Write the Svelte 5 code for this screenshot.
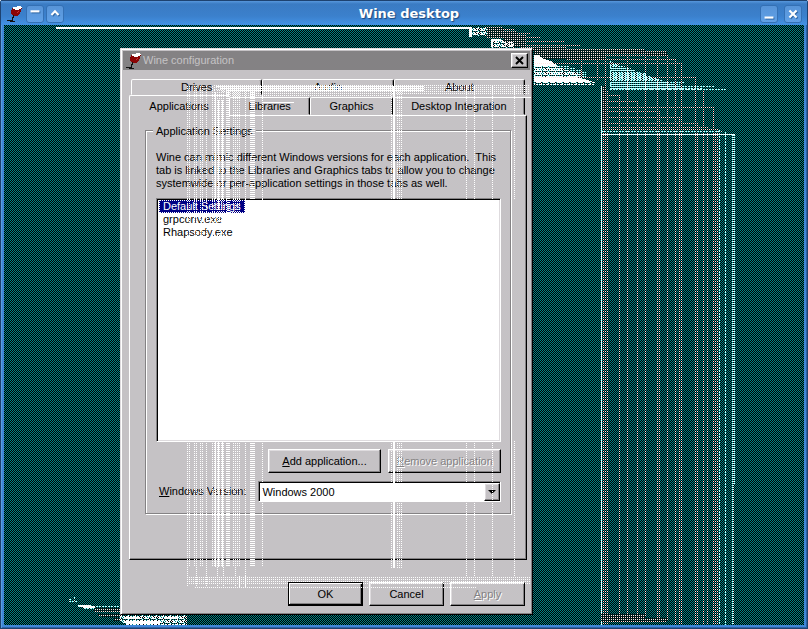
<script>
  const backTabs = ['Drives', 'Audio', 'About'];
  const frontTabs = [
    { name: 'Applications', grow: 100 },
    { name: 'Libraries', grow: 81 },
    { name: 'Graphics', grow: 82 },
    { name: 'Desktop Integration', grow: 133 }
  ];
  const apps = ['Default Settings', 'grpconv.exe', 'Rhapsody.exe'];
  const versions = ['Windows 2000', 'Windows XP', 'Windows 98'];
  let app = $state('Default Settings');
  let version = $state('Windows 2000');

  // Repaint trails sit on odd pixels, so that they share the phase of the weave
  const odd = (n) => n | 1;

  // Repaint trails, in desktop coordinates: [x, top, bottom]
  const columns = [
    [603, 88, 625], [605, 48, 625], [607, 90, 625], [619, 94, 616], [627, 50, 616],
    [637, 100, 616], [645, 50, 616], [657, 53, 618], [659, 110, 622], [667, 54, 620],
    [675, 58, 624], [679, 116, 625], [681, 62, 625], [695, 76, 625], [697, 122, 625],
    [703, 88, 625], [707, 126, 625], [713, 106, 625], [715, 128, 625], [717, 128, 625],
    [581, 49, 80], [597, 50, 80]
  ];
  // [y, left, right]
  const rows = [
    [94, 603, 619], [100, 603, 637], [106, 603, 713], [110, 603, 659], [116, 603, 679],
    [122, 603, 697], [126, 603, 707], [128, 603, 718], [50, 566, 645], [52, 566, 657], [54, 566, 667],
    [48, 566, 605], [58, 566, 675], [62, 534, 681], [76, 534, 695], [88, 645, 703],
    [28, 487, 514], [32, 487, 530], [36, 487, 540], [40, 505, 564], [44, 505, 581],
    [614, 601, 608], [616, 601, 645], [618, 601, 657], [620, 601, 667], [624, 601, 675]
  ];
  const cyanRows = [
    [65, 610, 618], [68, 610, 626], [70, 610, 634], [73, 610, 645], [75, 610, 645],
    [77, 610, 651], [79, 610, 659], [82, 610, 684], [84, 610, 680], [86, 610, 714],
    [88, 610, 702], [89, 610, 727], [606, 78, 120], [608, 84, 120]
  ];
  const dialogColumns = [
    187, 189, 194, 196, 200, 202, 206, 212, 214, 217, 219, 221, 223, 226, 233, 235, 237, 239, 245, 262
  ];
  const rightColumns = [391, 397, 399, 401];
  const longColumns = [466, 474, 492, 514];
</script>

<main class="frame">
  <header class="bar">
    <span class="side">
      {@render glass()}
      <button class="wm" aria-label="Shade"><svg viewBox="0 0 18 18"><path d="M4 6h10" /></svg></button>
      <button class="wm" aria-label="Roll up"><svg viewBox="0 0 18 18"><path d="M5 10l4-4 4 4" /></svg></button>
    </span>
    <h1>Wine desktop</h1>
    <span class="side end">
      <button class="wm" aria-label="Minimize"><svg viewBox="0 0 18 18"><path d="M4 13h10" /></svg></button>
      <button class="wm" aria-label="Close desktop"><svg viewBox="0 0 18 18"><path d="M5 5l8 8M13 5l-8 8" /></svg></button>
    </span>
  </header>

  <div class="desktop">
    <svg class="trails" viewBox="4 25 800 600" width="800" height="600" aria-hidden="true">
      <defs>
        <pattern id="pink" x="1" y="1" width="2" height="2" patternUnits="userSpaceOnUse">
          <rect width="2" height="2" fill="#001c1c" />
          <rect width="1" height="1" fill="#ffe7e4" />
        </pattern>
        <pattern id="cyan" width="3" height="2" patternUnits="userSpaceOnUse">
          <rect width="2" height="1" fill="#c6ffff" />
        </pattern>
        <pattern id="mix" width="7" height="4" patternUnits="userSpaceOnUse">
          <path fill="#fff" d="M0 0h3v1H0zM4 0h2v1H4zM1 1h1v1H1zM3 1h1v1H3zM5 1h2v1H5zM0 2h2v1H0zM4 2h3v1H4zM2 3h1v1H2z" />
        </pattern>
      </defs>
      <path d="M56 28H470" stroke="#fff" stroke-width="2" />
      <path fill="#fff" d="M469 27h3v10h-3zM491 39h10v2h-10zM491 39h2v8h-2z" />
      <path fill="url(#mix)" d="M469 27h18v9h-15z" />
      <path fill="url(#pink)" d="M487 27h16v4h14v4h9v12h-22v-9h-17z" />
      <path fill="url(#mix)" d="M491 39h13v3h10v6h-23z" />
      <path fill="url(#pink)" d="M520 47h46v12h-32v-9h-14zM566 49h40v10h-40zM606 49h39v4h-39zM645 51h22v4h-22zM601 86h4v42h-4z" />
      <path fill="#fff" d="M534 55h4l6 4 7 2 7 5h-24z" />
      <path fill="url(#cyan)" d="M534 66h34l8 3 10 3v5h-52z" />
      <path fill="url(#mix)" d="M534 66h24l8 4 15 4v3h-47z" />
      <path fill="#fff" d="M534 77h42l8 2 9 3h-59z" />
      <path fill="url(#mix)" d="M534 82h61v3h-61z" />
      <path fill="url(#cyan)" d="M610 62h2l20 7 13 6 20 6 17 6v3h-72z" />
      {#each columns as [x, top, bottom]}
        <path class="pink" d="M{x + 0.5} {odd(top)}V{bottom}" />
      {/each}
      {#each rows as [y, left, right]}
        <path class="pink" d="M{odd(left)} {odd(y) + 0.5}H{right}" />
      {/each}
      {#each cyanRows as [y, left, right]}
        <path class="cyan" d="M{left} {y + 0.5}H{right}" />
      {/each}
      <path class="cyan" d="M719.5 130V625M725.5 132V625M610.5 61V90M645.5 73V90" />
      <path d="M601.5 86V625M601 134.500H735M645.500 73V90" stroke="#e8ffff" />
      <path d="M601 131.500H722" class="cyan" />
      <path d="M733.500 135V484" class="wide" stroke-width="3" />
      <path d="M733 485V625" class="wide" stroke-width="2" />
      <path class="cyan" d="M69 601.500H77M69 599.500H71M74.500 597V601" />
      <path fill="#fff" d="M77 605h10l8 1v2H84z" />
      <path fill="url(#pink)" d="M94 608h26v4h-26zM96 614h24v3h-18zM114 618h8v3h-8zM601 614h44v3h-44zM601 618h66v3h-66z" />
      <path fill="url(#mix)" d="M120 615h67v10h-60l-7-4z" />
      <path fill="#fff" d="M124 617h16v2h-16zM126 621h34v3h-34zM164 617h14v2h-14z" />
    </svg>

    <section class="dialog" aria-label="Wine configuration">
      <header class="caption">
        {@render glass()}
        <h2>Wine configuration</h2>
        <button class="close" aria-label="Close">
          <svg viewBox="0 0 13 11"><path d="M3 2l7 7M10 2L3 9" stroke="#000" stroke-width="2" /></svg>
        </button>
      </header>

      <div class="sheet">
        <div class="tabs back">
          {#each backTabs as name}<button class="tab">{name}</button>{/each}
        </div>
        <div class="tabs front">
          {#each frontTabs as tab, i}
            <button class="tab" class:current={i === 0} style:flex-grow={tab.grow}>{tab.name}</button>
          {/each}
        </div>
        <div class="panel">
          <fieldset>
            <legend>Application Settings</legend>
            <p>Wine can mimic different Windows versions for each application.&nbsp; This tab is linked to the Libraries and Graphics tabs to allow you to change systemwide or per-application settings in those tabs as well.</p>
            <select class="list" size="10" aria-label="Applications" bind:value={app}>
              {#each apps as a}<option value={a}>{a}</option>{/each}
            </select>
            <div class="actions">
              <button class="push"><u>A</u>dd application...</button>
              <button class="push" disabled><u>R</u>emove application</button>
            </div>
            <div class="version">
              <label for="version"><u>W</u>indows Version:</label>
              <span class="combo">
                <select id="version" bind:value={version}>
                  {#each versions as v}<option value={v}>{v}</option>{/each}
                </select>
                <span class="drop"><svg viewBox="0 0 8 4"><path d="M0 0h8L4 4z" /></svg></span>
              </span>
            </div>
          </fieldset>
        </div>
        <footer>
          <button class="push default">OK</button>
          <button class="push">Cancel</button>
          <button class="push" disabled><u>A</u>pply</button>
        </footer>
      </div>

      <svg class="ghost" viewBox="120 48 413 567" width="413" height="567" aria-hidden="true">
        {#each dialogColumns as x, i}
          <path class="dots" d="M{x + 0.5} {86 + (i < 8 ? 0 : 4)}V199M{x + 0.5} 199V238M{x + 0.5} 441V{i % 3 ? 567 : 587}" />
        {/each}
        {#each rightColumns as x}
          <path class="dots" d="M{x + 0.5} 86V199M{x + 0.5} 441V568" />
        {/each}
        {#each longColumns as x}
          <path class="dots" d="M{x + 0.5} 86V199M{x + 0.5} 441V577" />
        {/each}
        <path class="solid" d="M215.500 92V199M218.500 100V210M222.500 100V199M215.500 441V567M218.500 441V567M222.500 441V567M239.500 576V587M245.500 576V587M393.500 86V199M394.500 86V199M393.500 441V568M394.500 441V568" />
        <path class="dots" stroke-width="3" d="M228.500 90V213M228.500 441V567" />
        <path class="dots" stroke-width="5" d="M252.500 90V199M252.500 441V567" />
        <path class="solid" d="M216 86.500H424M220 88.500H424M230 90.500H424M400 97.500H531M262 97.500H294M262 102.500H294" />
        <path class="dots" d="M214 85.500H530M214 87.500H530M214 89.500H530M222 91.500H530M226 93.500H530M222 95.500H392M187 577.500H531M187 579.500H531M187 581.500H531M187 583.500H531M195 587.500H476" />
      </svg>
    </section>
  </div>
</main>

{#snippet glass()}
  <svg class="glass" viewBox="0 0 16 16" aria-hidden="true">
    <path d="M6 1l7-1 2 1-1 4-4 5H6L4 8V5z" fill="#7b0000" />
    <path d="M6 1l7-1 2 1-1 2-5 1-3-1z" fill="#fff" />
    <path d="M5 3l4 1 5-1-1 4-3 3H6L4 8z" fill="#8a0505" />
    <path d="M7 9l-2 5M0 14h4l2 1h2M3 15h3" fill="none" stroke="#101010" />
    <path d="M10 7l2-2" stroke="#d03030" />
  </svg>
{/snippet}

<style>
  :global(body) { margin: 0; background: #fff; }
  .frame {
    box-sizing: border-box;
    min-height: 100vh;
    display: flex;
    flex-direction: column;
    padding: 0 4px 4px;
    background: #3f87d8;
    box-shadow: inset 1px 1px 0 #1d4270, inset -1px -1px 0 #1d4270, inset 2px 2px 0 #5a9de2, inset -2px -2px 0 #2b62a4;
    border-radius: 3px 3px 0 0;
  }
  .bar { display: flex; align-items: center; height: 25px; margin: 0 -3px; padding: 2px 5px 0 4px; box-sizing: border-box;
    background: linear-gradient(#1d4270 1px, #5797dc 1px, #3a7bc3 4px, #3b80cc 16px, #4290e2 24px); }
  .side { display: flex; align-items: center; gap: 2px; }
  .side .glass { margin: 0 1px 0 2px; }
  .end { gap: 6px; }
  h1 { flex: 1; margin: 0 6px 0 0; text-align: center; font: bold 13px/20px "DejaVu Sans", sans-serif; color: #fff; text-shadow: 1px 1px 1px #1c477c; }
  .wm { width: 18px; height: 18px; padding: 0; border: 1px solid #3470b4; border-radius: 3px; background: linear-gradient(#5794d8, #5fa0e6); }
  .wm svg { display: block; width: 16px; height: 16px; }
  .wm path { fill: none; stroke: #fff; stroke-width: 2.400; filter: drop-shadow(1px 1px 0 #285f9c); }
  .glass { width: 16px; height: 16px; flex: none; shape-rendering: crispEdges; }
  .desktop {
    position: relative;
    flex: 1;
    overflow: hidden;
    background: conic-gradient(#008284 25%, #000 0 50%, #008284 0 75%, #000 0) 0 0 / 2px 2px;
  }
  .trails { position: absolute; left: 0; top: 0; shape-rendering: crispEdges; }
  .pink { stroke: #ffe7e4; stroke-dasharray: 1 1; }
  .cyan { stroke: #b8ffff; stroke-dasharray: 2 1; }
  .wide { stroke: #d6ffff; stroke-dasharray: 1 1; }

  .dialog {
    position: absolute;
    left: 116px;
    top: 23px;
    width: 413px;
    box-sizing: border-box;
    padding: 2px;
    border: 1px solid;
    border-color: #dedbde #000 #000 #dedbde;
    box-shadow: inset 1px 1px 0 #fff, inset -1px -1px 0 #848284;
    background: #c5c2c5;
    font: 11px/13px "Liberation Sans", Arial, sans-serif;
    color: #000;
  }
  .ghost { position: absolute; left: -1px; top: -1px; pointer-events: none; shape-rendering: crispEdges; }
  .dots { stroke: #fff; stroke-dasharray: 1 1; }
  .solid { stroke: #fff; }
  .caption { display: flex; align-items: center; height: 19px; padding: 0 2px 0 3px; background: #848284; }
  .caption h2 { flex: 1; margin: 0 0 0 1px; font: inherit; color: #c5c2c5; }
  button { font: inherit; color: inherit; }
  .push, .close, .drop {
    box-sizing: border-box;
    border: 1px solid;
    border-color: #fff #000 #000 #fff;
    box-shadow: inset -1px -1px 0 #848284, inset 1px 1px 0 #dedbde;
    background: #c5c2c5;
    border-radius: 0;
  }
  .close { width: 17px; height: 15px; padding: 1px; }
  .close svg { display: block; width: 13px; height: 11px; }
  .sheet { padding: 9px 3px 6px 6px; }
  .tabs { display: flex; }
  .back { margin: 0 2px; }
  .front { margin-right: 2px; height: 20px; align-items: flex-end; position: relative; }
  .tab {
    box-sizing: border-box;
    flex: 1 1 0;
    height: 16px;
    padding: 0;
    background: #c5c2c5;
    border: 1px solid;
    border-color: #fff #000 transparent #fff;
    border-radius: 2px 2px 0 0;
    box-shadow: inset -1px 0 0 #848284;
    white-space: nowrap;
  }
  .front .tab { height: 18px; }
  .front .tab.current { height: 21px; margin-bottom: -1px; border-right-color: #c5c2c5; border-bottom: 0; box-shadow: none; }
  .panel {
    padding: 6px 15px 45px 15px;
    border: 1px solid;
    border-color: #fff #000 #000 #fff;
    box-shadow: inset -1px -1px 0 #848284;
  }
  fieldset {
    min-width: 0;
    margin: 0;
    padding: 0 9px 11px 10px;
    border: 1px solid #848284;
    box-shadow: 1px 1px 0 #fff, inset 1px 1px 0 #fff;
  }
  legend { margin-left: -3px; padding: 3px 3px 0; background: #c5c2c5; }
  p { margin: 13px 0 8px; }
  .list {
    display: block;
    box-sizing: border-box;
    width: 100%;
    height: 244px;
    padding: 1px;
    overflow: hidden;
    appearance: none;
    border: 1px solid;
    border-color: #848284 #fff #fff #848284;
    border-radius: 0;
    outline: 0;
    box-shadow: inset 1px 1px 0 #000, inset -1px -1px 0 #dedbde;
    background: #fff;
    color: #000;
    font: inherit;
  }
  .list option { width: 86px; box-sizing: border-box; min-height: 13px; padding: 0 0 0 4px; margin-left: 1px; }
  .list option:checked { color: #fff; background: #000084 linear-gradient(#000084, #000084); outline: 1px dotted #fff; outline-offset: -1px; }
  .actions { display: flex; justify-content: flex-end; gap: 7px; margin: 7px 0 8px; }
  .push { height: 24px; width: 75px; padding: 0; }
  .actions .push { width: 113px; }
  .push:disabled { color: #848284; text-shadow: 1px 1px 0 #fff; }
  .default { border-color: #000; box-shadow: inset -1px -1px 0 #000, inset 1px 1px 0 #fff, inset -2px -2px 0 #848284; }
  .version { display: flex; align-items: center; gap: 12px; padding-left: 3px; }
  .combo {
    flex: 1;
    display: flex;
    box-sizing: border-box;
    height: 21px;
    border: 1px solid;
    border-color: #848284 #fff #fff #848284;
    box-shadow: inset 1px 1px 0 #000;
    background: #fff;
    padding: 1px 0 0 1px;
  }
  .combo select { flex: 1; min-width: 0; appearance: none; border: 0; padding: 0 2px; background: transparent; font: inherit; color: #000; }
  .drop { width: 16px; display: grid; place-items: center; pointer-events: none; }
  .drop svg { width: 8px; height: 4px; display: block; }
  footer { display: flex; justify-content: flex-end; gap: 6px; padding: 22px 2px 0 0; }
</style>
